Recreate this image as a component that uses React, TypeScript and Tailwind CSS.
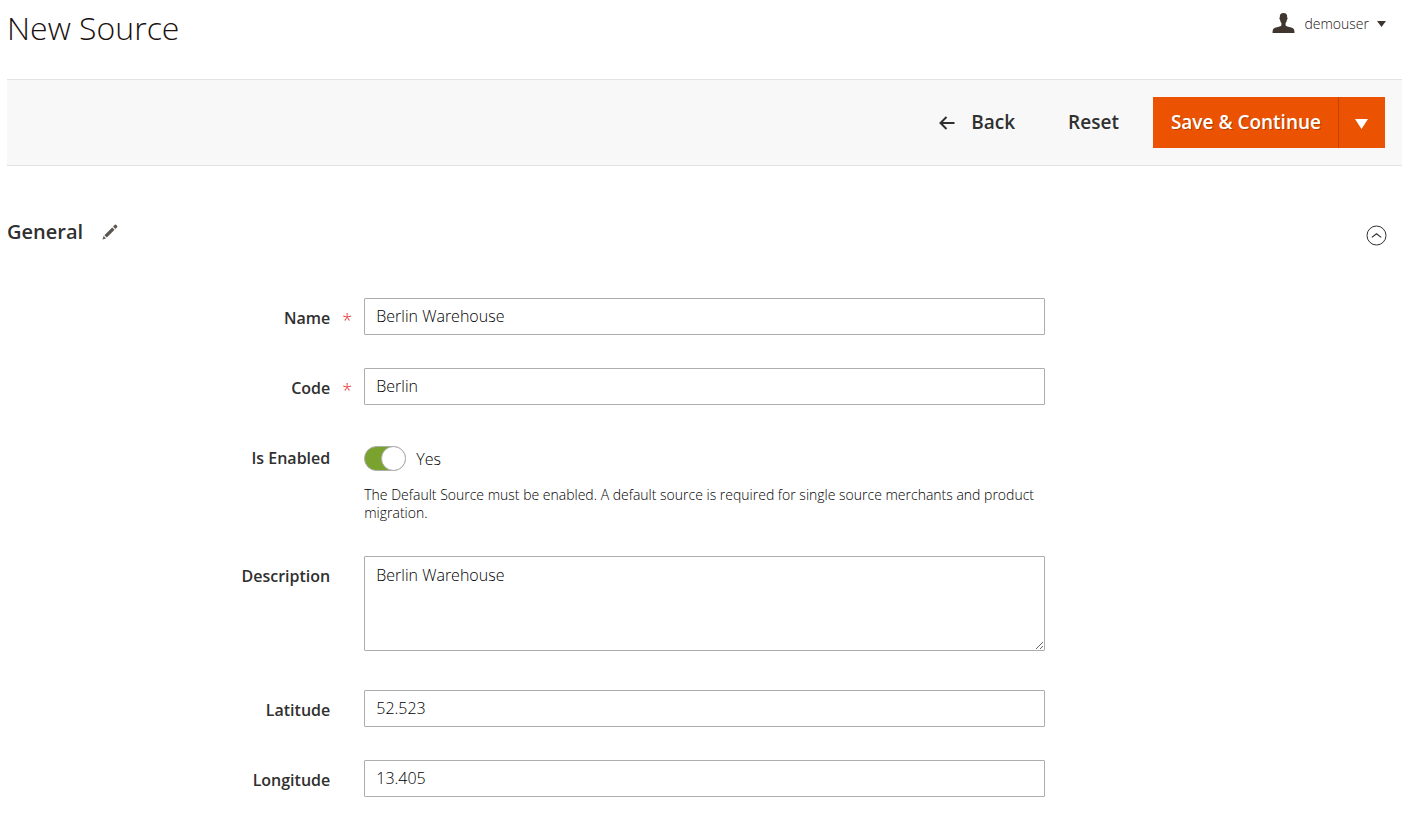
import { useId, useState, type ReactNode } from 'react';

type FieldProps = {
  label: string;
  htmlFor: string;
  required?: boolean;
  children: ReactNode;
};

function Field({ label, htmlFor, required, children }: FieldProps) {
  return (
    <div className="grid grid-cols-4">
      <div className="flex items-start justify-end pr-[34px] pt-2">
        <label htmlFor={htmlFor} className="relative text-base leading-6 font-semibold">
          {label}
          {required && (
            <span aria-hidden="true" className="absolute top-0 left-full pl-3 text-lg leading-7 font-light text-[#e22626]">
              *
            </span>
          )}
        </label>
      </div>
      <div className="col-span-2">{children}</div>
    </div>
  );
}

const control =
  'block w-full rounded-[1px] border border-[#adadad] bg-white px-[11px] text-base font-light text-black outline-none focus:border-[#007bdb]';

function TextField({ label, value, required }: { label: string; value: string; required?: boolean }) {
  const id = useId();
  return (
    <Field label={label} htmlFor={id} required={required}>
      <input id={id} type="text" defaultValue={value} required={required} className={`${control} h-[37px] pb-0.5`} />
    </Field>
  );
}

export default function App() {
  const [enabled, setEnabled] = useState(true);
  return (
    <div className="min-h-screen bg-white pr-2 pb-4 pl-[7px] font-['Open_Sans','Noto_Sans',sans-serif] text-[#303030]">
      <header className="flex h-[79px] items-start justify-between pr-4">
        <h1 className="pt-2 text-[32px] leading-10 font-light text-[#1a1210]">New Source</h1>
        <button type="button" className="flex items-center gap-2 pt-3 text-sm leading-6 font-light text-[#1a1210]">
          <svg width="24" height="20" viewBox="0 0 24 20" fill="#41362f" className="mb-0.5" aria-hidden="true">
            <path d="M11.500 0C8.900 0 7.600 1.500 7.800 4.400c-.7.200-.5 1.900.3 2.300.2 1.700.7 2.600 1.300 3.200v2.500C8.500 13.500 5.500 14 3 14.800 1 15.500.500 17 .500 20h22c0-3-.5-4.500-2.500-5.200-2.500-.8-5.500-1.300-6.400-2.400V9.900c.6-.6 1.100-1.500 1.300-3.200.8-.4 1-2.100.3-2.300C15.400 1.500 14.100 0 11.500 0z" />
          </svg>
          <span>demouser</span>
          <svg width="9" height="6" viewBox="0 0 9 6" fill="#41362f" aria-hidden="true">
            <path d="M0 0h9L4.500 6z" />
          </svg>
        </button>
      </header>

      <div className="flex h-[87px] items-center justify-end border-y border-[#e3e3e3] bg-[#f8f8f8] pr-[17px] text-[19px]">
        <button type="button" className="flex items-center gap-4 font-semibold">
          <svg width="16" height="14" viewBox="0 0 16 14" fill="none" stroke="currentColor" strokeWidth="2" aria-hidden="true">
            <path d="M15.500 7H1.500M7.500 1L1.500 7l6 6" />
          </svg>
          Back
        </button>
        <button type="button" className="ml-[53px] font-semibold">
          Reset
        </button>
        <div className="ml-[34px] flex h-[51px] text-white">
          <button type="button" className="border-r border-[#c04300] bg-[#eb5202] pr-[17px] pl-[18px] font-semibold text-shadow-[1px_1px_0_rgb(0_0_0/0.25)]">
            Save &amp; Continue
          </button>
          <button type="button" aria-label="More save options" className="flex w-[46px] items-center justify-center bg-[#eb5202]">
            <svg width="14" height="10" viewBox="0 0 14 10" fill="currentColor" className="mt-0.5" aria-hidden="true">
              <path d="M0 0h13L6.500 10z" />
            </svg>
          </button>
        </div>
      </div>

      <main className="pt-[50px]">
        <div className="flex items-center justify-between pr-[15px]">
          <div className="flex items-center gap-[19px]">
            <h2 className="text-xl leading-8 font-semibold">General</h2>
            <svg width="16" height="16" viewBox="0 0 16 16" fill="#5c5650" aria-hidden="true">
              <path d="M.5 15.500l1.100-3.500 2.400 2.400zM2.400 11.200l7.800-7.800 2.400 2.400-7.800 7.800zM11 2.600l1.700-1.700c.5-.5 1-.5 1.500 0l.9.9c.5.5.5 1 0 1.500L13.400 5z" />
            </svg>
          </div>
          <button type="button" aria-label="Collapse General" className="pt-1.5">
            <svg width="21" height="21" viewBox="0 0 21 21" fill="none" stroke="#303030" aria-hidden="true">
              <circle cx="10.500" cy="10.500" r="9.500" />
              <path d="M5.800 12.400l4.700-3.700 4.700 3.700" strokeWidth="1.200" />
            </svg>
          </button>
        </div>

        <form className="flex flex-col gap-[33px] px-[17px] pt-[50px]">
          <TextField label="Name" value="Berlin Warehouse" required />
          <TextField label="Code" value="Berlin" required />
          <Field label="Is Enabled" htmlFor="enabled">
            <div className="flex items-center gap-2.5 pt-2">
              <span className="relative flex">
                <input
                  id="enabled"
                  type="checkbox"
                  role="switch"
                  checked={enabled}
                  onChange={(e) => setEnabled(e.target.checked)}
                  className="peer h-[25px] w-[42px] appearance-none rounded-full border border-[#adadad] bg-[#e3e3e3] checked:bg-[#79a22e]"
                />
                <span className="pointer-events-none absolute top-0 left-0 size-[25px] rounded-full border border-[#adadad] bg-white peer-checked:left-[17px]" />
              </span>
              <span className="text-base leading-6 font-light text-black">{enabled ? 'Yes' : 'No'}</span>
            </div>
            <p className="pt-[15px] pb-px text-sm leading-[18px] font-light text-black">
              The Default Source must be enabled. A default source is required for single source merchants and product migration.
            </p>
          </Field>
          <Field label="Description" htmlFor="description">
            <textarea id="description" defaultValue="Berlin Warehouse" className={`${control} mb-1.5 h-[95px] resize-y pt-2 leading-[21px]`} />
          </Field>
          <TextField label="Latitude" value="52.523" />
          <TextField label="Longitude" value="13.405" />
        </form>
      </main>
    </div>
  );
}
